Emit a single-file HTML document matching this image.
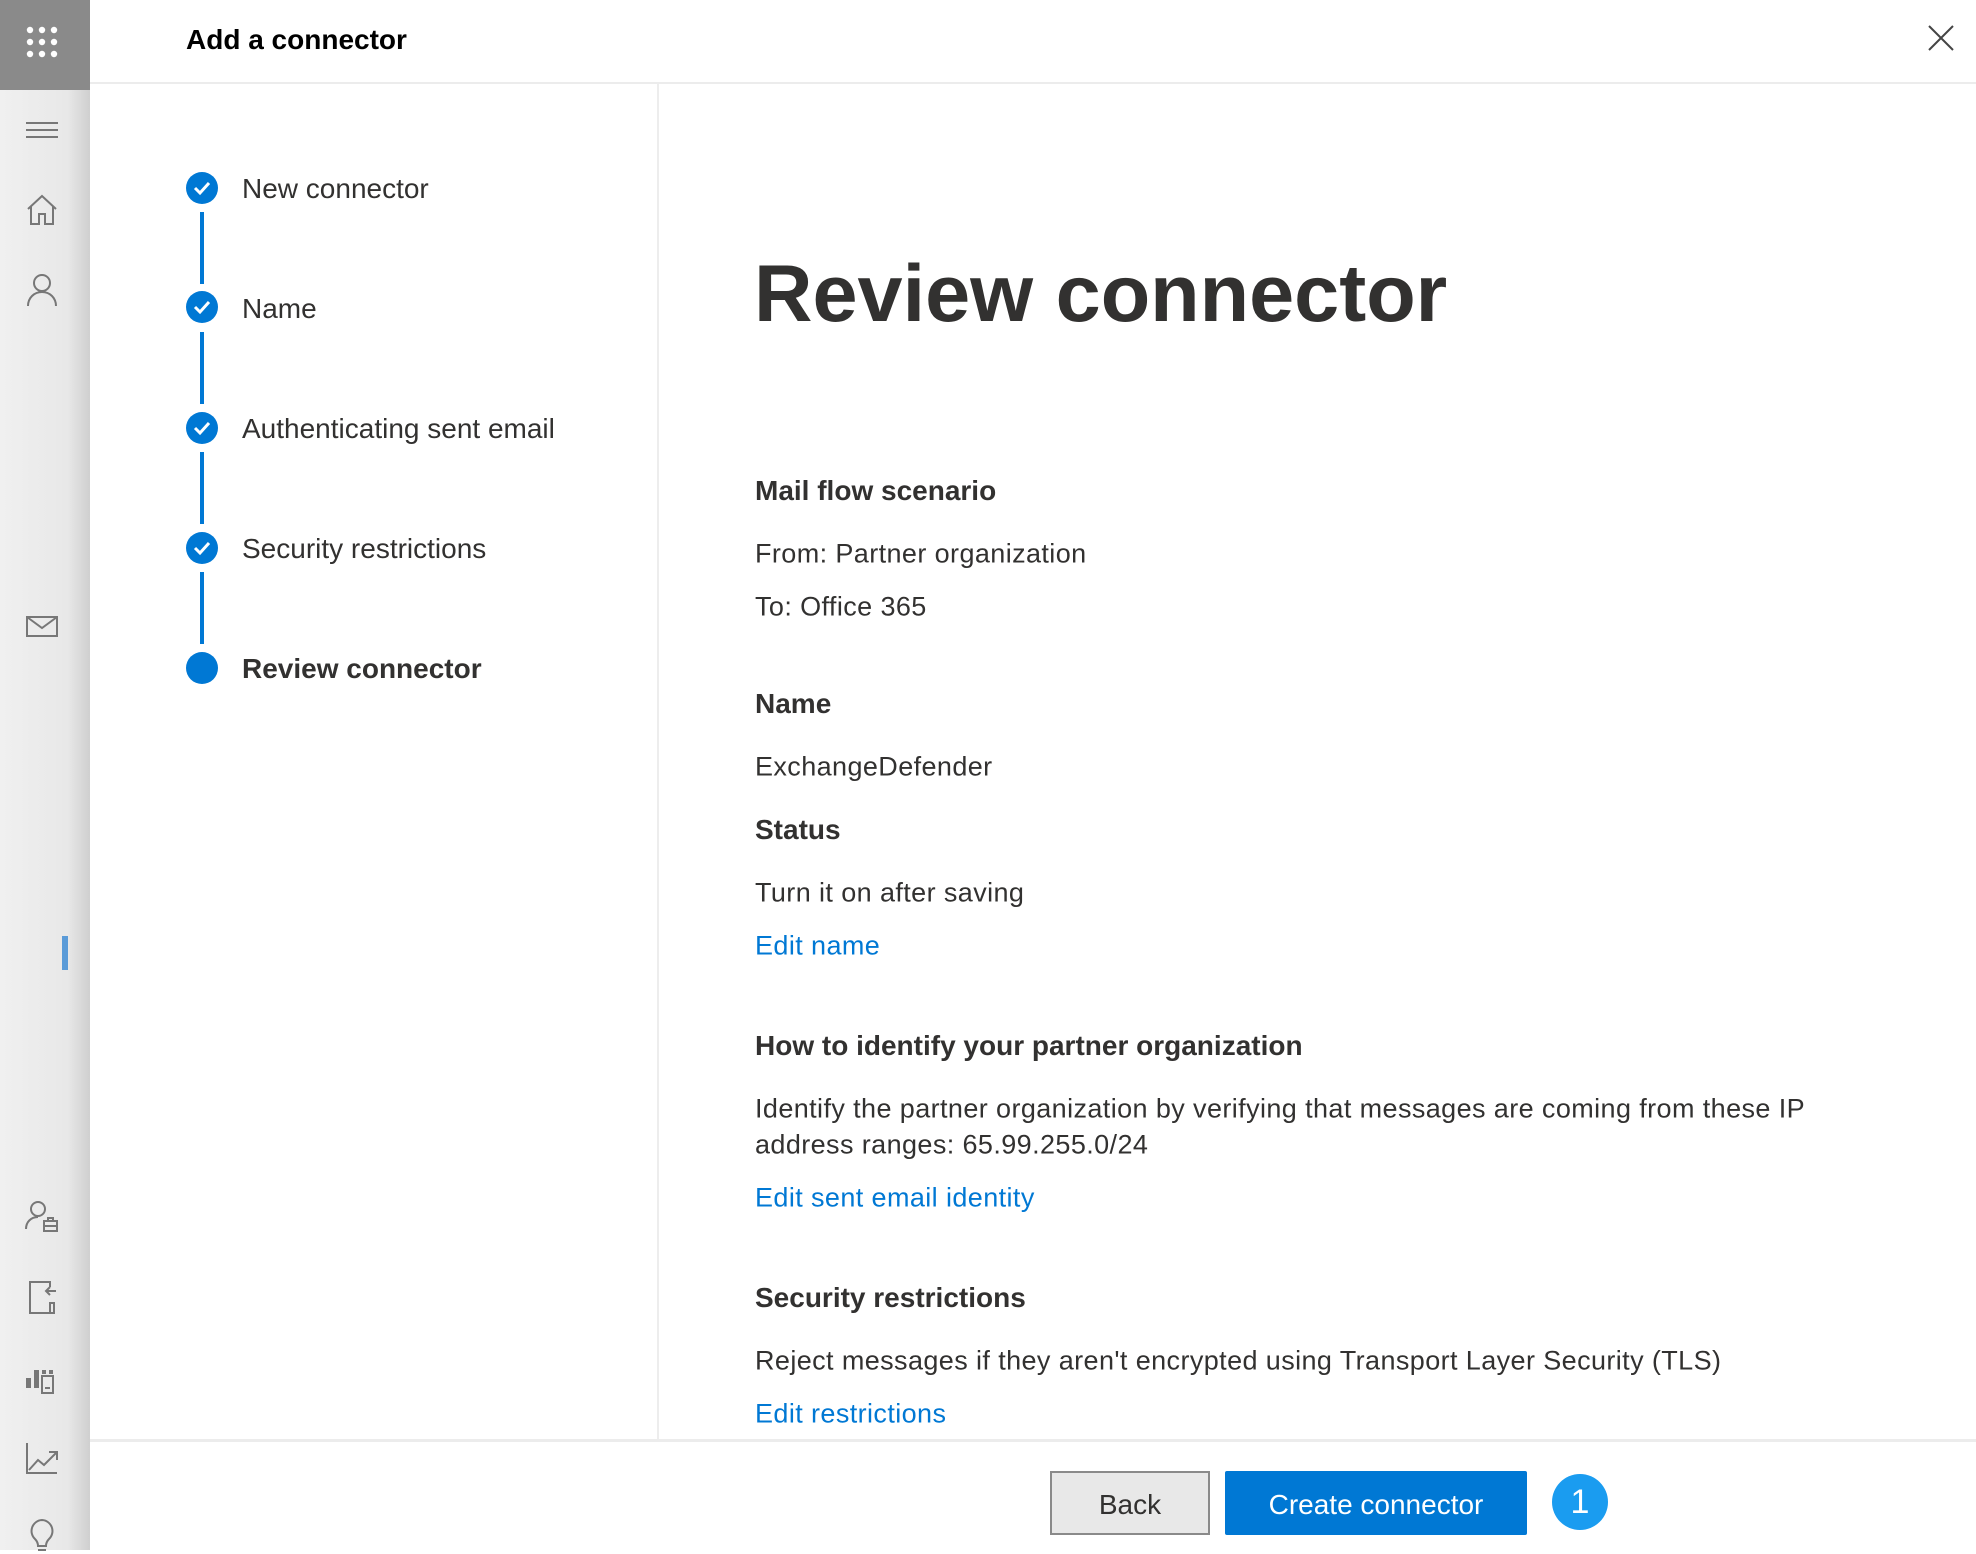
<!DOCTYPE html>
<html><head><meta charset="utf-8"><style>
*{margin:0;padding:0;box-sizing:border-box}
body{width:1976px;height:1550px;position:relative;overflow:hidden;background:#fff;font-family:"Liberation Sans",sans-serif;color:#323130}
.a{position:absolute;white-space:nowrap}
#side{position:absolute;left:0;top:0;width:90px;height:1550px;background:linear-gradient(to right,#f0f0f0 0%,#e8e8e8 75%,#cfcfcf 100%)}
#tile{position:absolute;left:0;top:0;width:90px;height:90px;background:#8a8a8a}
.ic{position:absolute;left:24px;width:36px;height:36px}
.step{position:absolute;left:186px;width:32px;height:32px;border-radius:50%;background:#0078d4}
.line{position:absolute;left:200px;width:4px;background:#0078d4}
.st{position:absolute;left:242px;font-size:28px;white-space:nowrap;transform:translateY(-50%);margin-top:1px}
.h{position:absolute;left:755px;font-size:28px;font-weight:bold;transform:translateY(-50%);white-space:nowrap;margin-top:1px}
.t{position:absolute;left:755px;font-size:27px;letter-spacing:0.4px;transform:translateY(-50%);white-space:nowrap;margin-top:1px}
.l{position:absolute;left:755px;font-size:27px;letter-spacing:0.4px;color:#0078d4;transform:translateY(-50%);white-space:nowrap;margin-top:1px}
</style></head><body>
<div id="side">
<div id="tile">
<svg width="90" height="90" viewBox="0 0 90 90" fill="#fff"><g>
<circle cx="30" cy="30" r="3.2"/><circle cx="42" cy="30" r="3.2"/><circle cx="54" cy="30" r="3.2"/>
<circle cx="30" cy="42" r="3.2"/><circle cx="42" cy="42" r="3.2"/><circle cx="54" cy="42" r="3.2"/>
<circle cx="30" cy="54" r="3.2"/><circle cx="42" cy="54" r="3.2"/><circle cx="54" cy="54" r="3.2"/></g></svg>
</div>
<svg class="ic" style="top:112px" viewBox="0 0 36 36" stroke="#777" stroke-width="2" fill="none"><path d="M2 11h32M2 18h32M2 25h32"/></svg>
<svg class="ic" style="top:192px" viewBox="0 0 36 36" stroke="#777" stroke-width="2" fill="none"><path d="M4 17L18 4l14 13M7 14v18h8v-10h6v10h8V14"/></svg>
<svg class="ic" style="top:272px" viewBox="0 0 36 36" stroke="#777" stroke-width="2" fill="none"><circle cx="18" cy="11" r="8"/><path d="M4 34c0-8 6-14 14-14s14 6 14 14"/></svg>
<svg class="ic" style="top:608px" viewBox="0 0 36 36" stroke="#777" stroke-width="2" fill="none"><rect x="3" y="9" width="30" height="19"/><path d="M3 9l15 11 15-11"/></svg>
<div style="position:absolute;left:62px;top:936px;width:6px;height:34px;background:#5a9bd8"></div>
<svg class="ic" style="top:1199px" viewBox="0 0 36 36" stroke="#777" stroke-width="2" fill="none"><circle cx="14" cy="10" r="7"/><path d="M2 30c0-7 5-12 12-12"/><rect x="20" y="22" width="13" height="10"/><path d="M24 22v-3h5v3M20 27h13"/></svg>
<svg class="ic" style="top:1279px" viewBox="0 0 36 36" stroke="#777" stroke-width="2" fill="none"><path d="M26 8V3H6v31h20"/><path d="M32 12H22m4-4l-4 4 4 4M26 24v10h4V24z"/></svg>
<svg class="ic" style="top:1359px" viewBox="0 0 36 36" fill="#777"><rect x="2" y="19" width="5" height="10"/><rect x="10" y="11" width="5" height="18"/><rect x="18" y="17" width="11" height="17" fill="none" stroke="#777" stroke-width="2"/><rect x="18" y="11" width="4" height="4"/><rect x="25" y="11" width="4" height="4"/><rect x="21" y="28" width="5" height="2"/></svg>
<svg class="ic" style="top:1440px" viewBox="0 0 36 36" stroke="#777" stroke-width="2" fill="none"><path d="M3 3v30h30M5 30l9-10 6 5 12-12M25 12h8v8"/></svg>
<svg class="ic" style="top:1518px" viewBox="0 0 36 36" stroke="#777" stroke-width="2" fill="none"><path d="M18 2a11 11 0 0 0-7 19c2 2 3 4 3 7h8c0-3 1-5 3-7A11 11 0 0 0 18 2zM14 32h8"/></svg>
</div>

<div class="a" style="left:186px;top:24px;font-size:28px;font-weight:bold;color:#000">Add a connector</div>
<svg style="position:absolute;left:1928px;top:25px" width="26" height="26" viewBox="0 0 26 26" stroke="#444" stroke-width="2"><path d="M1 1l24 24M25 1L1 25"/></svg>
<div style="position:absolute;left:90px;top:82px;width:1886px;height:2px;background:#ececec"></div>
<div style="position:absolute;left:657px;top:84px;width:2px;height:1356px;background:#ededed"></div>
<div style="position:absolute;left:90px;top:1439px;width:1886px;height:3px;background:#ececec"></div>

<div class="line" style="top:212px;height:72px"></div>
<div class="line" style="top:332px;height:72px"></div>
<div class="line" style="top:452px;height:72px"></div>
<div class="line" style="top:572px;height:72px"></div>
<svg class="step" style="top:172px" viewBox="0 0 32 32"><path d="M9 16l5 5 9-10" stroke="#fff" stroke-width="3" fill="none"/></svg>
<svg class="step" style="top:291px" viewBox="0 0 32 32"><path d="M9 16l5 5 9-10" stroke="#fff" stroke-width="3" fill="none"/></svg>
<svg class="step" style="top:412px" viewBox="0 0 32 32"><path d="M9 16l5 5 9-10" stroke="#fff" stroke-width="3" fill="none"/></svg>
<svg class="step" style="top:532px" viewBox="0 0 32 32"><path d="M9 16l5 5 9-10" stroke="#fff" stroke-width="3" fill="none"/></svg>
<div class="step" style="top:652px"></div>
<div class="st" style="top:188px">New connector</div>
<div class="st" style="top:308px">Name</div>
<div class="st" style="top:428px">Authenticating sent email</div>
<div class="st" style="top:548px">Security restrictions</div>
<div class="st" style="top:668px;font-weight:bold">Review connector</div>

<div class="a" style="left:754px;top:254px;font-size:81px;font-weight:bold;line-height:1">Review connector</div>

<div class="h" style="top:490px">Mail flow scenario</div>
<div class="t" style="top:553px">From: Partner organization</div>
<div class="t" style="top:606px">To: Office 365</div>
<div class="h" style="top:703px">Name</div>
<div class="t" style="top:766px">ExchangeDefender</div>
<div class="h" style="top:829px">Status</div>
<div class="t" style="top:892px">Turn it on after saving</div>
<div class="l" style="top:945px">Edit name</div>
<div class="h" style="top:1045px">How to identify your partner organization</div>
<div class="t" style="top:1108px">Identify the partner organization by verifying that messages are coming from these IP</div>
<div class="t" style="top:1144px">address ranges: 65.99.255.0/24</div>
<div class="l" style="top:1197px">Edit sent email identity</div>
<div class="h" style="top:1297px">Security restrictions</div>
<div class="t" style="top:1360px">Reject messages if they aren't encrypted using Transport Layer Security (TLS)</div>
<div class="l" style="top:1413px">Edit restrictions</div>

<div style="position:absolute;left:1050px;top:1471px;width:160px;height:64px;background:#e8e8e8;border:2px solid #8a8a8a;font-size:28px;display:flex;align-items:center;justify-content:center;padding-top:3px">Back</div>
<div style="position:absolute;left:1225px;top:1471px;width:302px;height:64px;background:#0078d4;color:#fff;font-size:28px;display:flex;align-items:center;justify-content:center;border-radius:2px;padding-top:3px">Create connector</div>
<div style="position:absolute;left:1552px;top:1474px;width:56px;height:56px;border-radius:50%;background:#1a9cf0;color:#fff;font-size:34px;display:flex;align-items:center;justify-content:center">1</div>
</body></html>
